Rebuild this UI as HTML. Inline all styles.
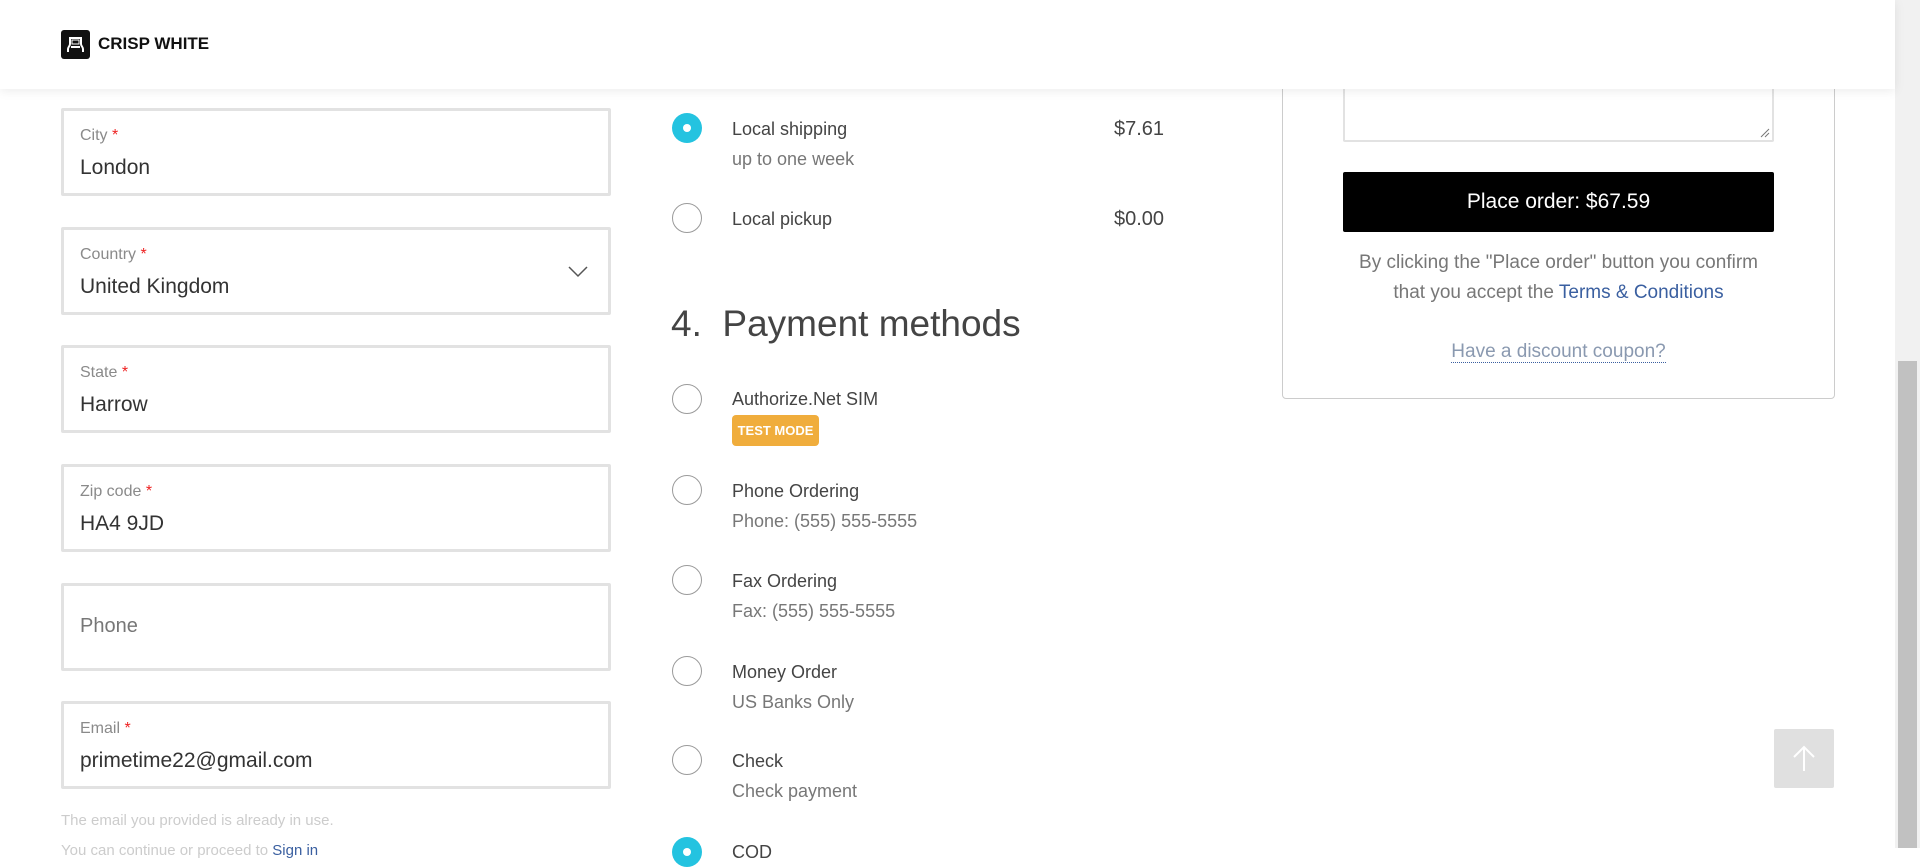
<!DOCTYPE html>
<html><head><meta charset="utf-8"><style>
*{margin:0;padding:0;box-sizing:border-box}
body{width:1920px;height:848px;overflow:hidden;background:#fff;font-family:"Liberation Sans",sans-serif;color:#333;position:relative}
.a{position:absolute;white-space:nowrap}
.hdr{position:absolute;left:0;top:0;width:1895px;height:89px;background:#fff;box-shadow:0 2px 10px rgba(0,0,0,.08);z-index:5}
.sb{position:absolute;left:1895px;top:0;width:25px;height:848px;background:#f1f1f1}
.th{position:absolute;left:1898px;top:361px;width:19px;height:487px;background:#c1c1c1}
.f{position:absolute;left:61px;width:550px;height:88px;border:3px solid #e2e2e2;border-radius:2px}
.f .l{position:absolute;left:16px;top:16px;font-size:16px;color:#8a8a8a}
.f .l b{color:#e22;font-weight:normal}
.f .v{position:absolute;left:16px;top:45px;font-size:21px;color:#333}
.r{position:absolute;left:672px;width:30px;height:30px;border:1.5px solid #9a9a9a;border-radius:50%}
.r.on{background:#24c3e0;border:none}
.r.on::after{content:"";position:absolute;left:11px;top:11px;width:8px;height:8px;border-radius:50%;background:#fff}
.t{position:absolute;left:732px;font-size:18px;color:#444;white-space:nowrap}
.s{position:absolute;left:732px;font-size:18px;color:#777;white-space:nowrap}
</style></head><body>
<div class="hdr">
 <svg class="a" style="left:61px;top:30px" width="29" height="29" viewBox="0 0 29 29"><rect width="29" height="29" rx="3" fill="#111"/><path d="M8 8h13M9 8v6c0 2-2 3-2 5v3M20 8v6c0 2 2 3 2 5v3M10 17h9" stroke="#fff" stroke-width="2" fill="none"/><path d="M11 10h7v4h-7z" fill="none" stroke="#fff" stroke-width="1"/></svg>
 <div class="a" style="left:98px;top:34px;font-size:17px;font-weight:bold;color:#111">CRISP WHITE</div>
</div>
<div class="sb"></div><div class="th"></div>

<div class="f" style="top:108px"><div class="l">City <b>*</b></div><div class="v">London</div></div>
<div class="f" style="top:227px"><div class="l">Country <b>*</b></div><div class="v">United Kingdom</div>
 <svg class="a" style="left:504px;top:36px" width="20" height="12" viewBox="0 0 20 12"><path d="M1 1l9 9 9-9" stroke="#555" stroke-width="1.5" fill="none"/></svg></div>
<div class="f" style="top:345px"><div class="l">State <b>*</b></div><div class="v">Harrow</div></div>
<div class="f" style="top:464px"><div class="l">Zip code <b>*</b></div><div class="v">HA4 9JD</div></div>
<div class="f" style="top:583px"><div class="v" style="top:29px;color:#777;font-size:20px">Phone</div></div>
<div class="f" style="top:701px"><div class="l">Email <b>*</b></div><div class="v">primetime22@gmail.com</div></div>
<div class="a" style="left:61px;top:812px;font-size:15px;color:#ccc">The email you provided is already in use.</div>
<div class="a" style="left:61px;top:842px;font-size:15px;color:#ccc">You can continue or proceed to <span style="color:#3a5fa0">Sign in</span></div>

<div class="r on" style="top:113px"></div>
<div class="t" style="top:119px">Local shipping</div>
<div class="a" style="left:1114px;top:118px;font-size:20px;color:#444">$7.61</div>
<div class="s" style="top:149px">up to one week</div>
<div class="r" style="top:203px"></div>
<div class="t" style="top:209px">Local pickup</div>
<div class="a" style="left:1114px;top:208px;font-size:20px;color:#444">$0.00</div>

<div class="a" style="left:671px;top:303px;font-size:37px;color:#444">4.&nbsp; Payment methods</div>

<div class="r" style="top:384px"></div>
<div class="t" style="top:389px">Authorize.Net SIM</div>
<div class="a" style="left:732px;top:415px;width:87px;height:31px;background:#f0ad3c;border-radius:4px;color:#fff;font-size:13px;font-weight:bold;text-align:center;line-height:31px">TEST MODE</div>
<div class="r" style="top:475px"></div>
<div class="t" style="top:481px">Phone Ordering</div><div class="s" style="top:511px">Phone: (555) 555-5555</div>
<div class="r" style="top:565px"></div>
<div class="t" style="top:571px">Fax Ordering</div><div class="s" style="top:601px">Fax: (555) 555-5555</div>
<div class="r" style="top:656px"></div>
<div class="t" style="top:662px">Money Order</div><div class="s" style="top:692px">US Banks Only</div>
<div class="r" style="top:745px"></div>
<div class="t" style="top:751px">Check</div><div class="s" style="top:781px">Check payment</div>
<div class="r on" style="top:837px"></div>
<div class="t" style="top:842px">COD</div>

<div class="a" style="left:1282px;top:60px;width:553px;height:339px;border:1px solid #ccc;border-radius:4px"></div>
<div class="a" style="left:1343px;top:60px;width:431px;height:82px;border:2px solid #e2e2e2;border-top:none;border-radius:2px;background:#fff">
 <svg class="a" style="right:2px;bottom:2px" width="10" height="10"><path d="M1 9L9 1M5 9L9 5" stroke="#777" stroke-width="1"/></svg></div>
<div class="a" style="left:1343px;top:172px;width:431px;height:60px;background:#000;border-radius:2px;color:#fff;font-size:21px;text-align:center;line-height:60px">Place order: $67.59</div>
<div class="a" style="left:1282px;top:248px;width:553px;text-align:center;font-size:19px;color:#777;line-height:30px">By clicking the "Place order" button you confirm<br>that you accept the <span style="color:#3a5fa0">Terms &amp; Conditions</span></div>
<div class="a" style="left:1282px;top:341px;width:553px;text-align:center;font-size:19px;color:#8a99b0"><span style="border-bottom:1px dotted #3a5fa0">Have a discount coupon?</span></div>

<div class="a" style="left:1774px;top:729px;width:60px;height:59px;background:#e0e0e0;border-radius:2px">
 <svg class="a" style="left:18px;top:16px" width="24" height="27" viewBox="0 0 24 27"><path d="M12 26V2M2 12L12 2l10 10" stroke="#fff" stroke-width="2" fill="none"/></svg></div>
</body></html>
